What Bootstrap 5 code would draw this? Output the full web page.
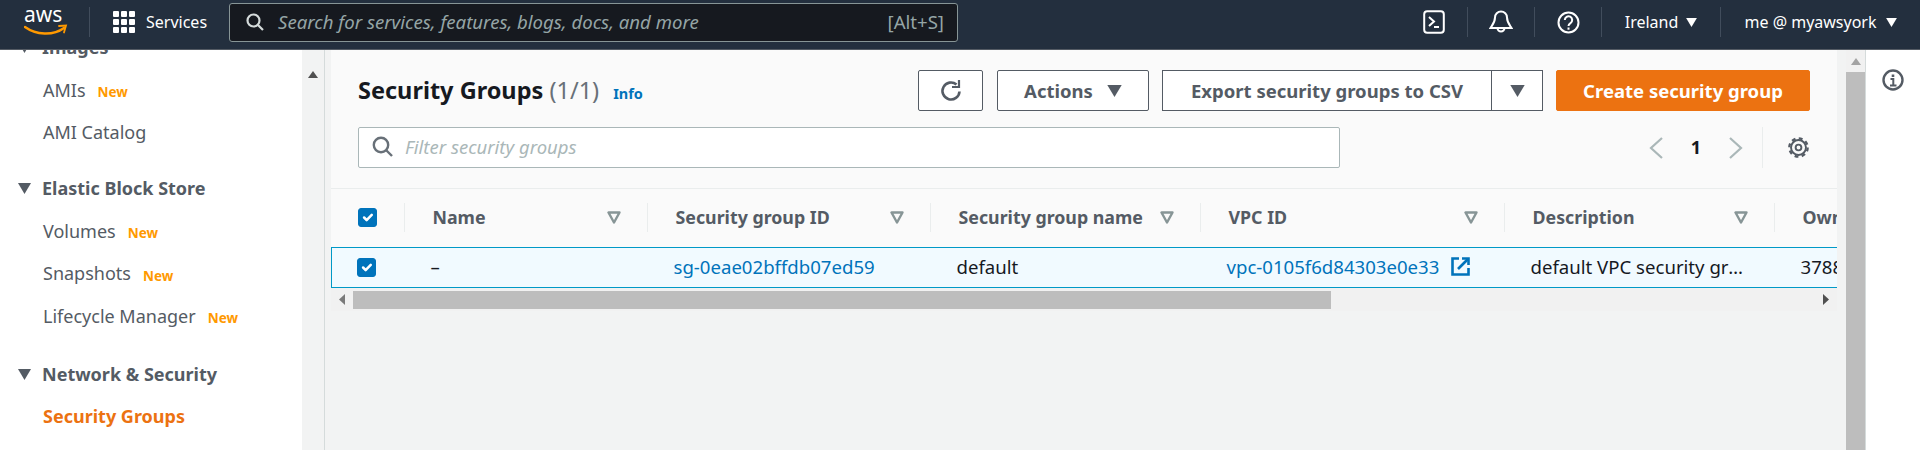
<!DOCTYPE html>
<html lang="en">
<head>
  <meta charset="UTF-8" />
  <meta name="viewport" content="width=device-width, initial-scale=1" />
  <title>Security Groups</title>
  <link href="https://cdn.jsdelivr.net/npm/bootstrap@5.3.0/dist/css/bootstrap.min.css" rel="stylesheet" />
  <style>
    html, body {
      height: 450px;
      overflow: hidden;
    }
    body {
      font-family: "Noto Sans", "Liberation Sans", sans-serif;
      font-size: 16px;
      color: #16191f;
      background: #f2f3f3;
    }
    /* top bar */
    .aws-top {
      height: 50px;
      background: #232f3e;
      border-bottom: 1px solid #545b64;
      padding: 0 0 5px 0;
      flex-wrap: nowrap;
      justify-content: flex-start;
      color: #fff;
    }
    .logo-cell { width: 90px; padding-left: 24px; }
    .services-cell { width: 139px; padding-left: 23px; gap: 11px; }
    .top-sep { height: 30px; border-right: 1px solid #414d5c; }
    .search-box {
      width: 729px;
      height: 39px;
      background: #16191f;
      border: 1px solid #879596;
      border-radius: 3px;
      padding: 0 13px 0 16px;
      color: #95a5a6;
      font-size: 18.6px;
    }
    .search-hint { font-style: italic; margin-left: 14px; }
    .top-cell { height: 30px; border-right: 1px solid #414d5c; }
    .top-cell-icon { width: 67px; }
    .top-cell-region { width: 119px; gap: 8px; }
    .top-cell-user { width: 199px; gap: 9px; border-right: 0; }

    /* sidebar */
    .app-body { height: 400px; }
    .side-nav {
      width: 302px;
      background: #fff;
      overflow: hidden;
      flex: none;
      color: #545b64;
      font-size: 18px;
    }
    .side-list { margin-top: -23.5px; }
    .side-item {
      height: 42.4px;
      padding-left: 43px;
      gap: 12px;
    }
    .side-head {
      height: 42.4px;
      font-weight: 700;
      padding-left: 18px;
      gap: 11px;
      margin-top: 14px;
    }
    .side-head:first-child { margin-top: 0; }
    .side-head-net { margin-top: 16px; }
    .side-new { color: #f90; font-size: 13.5px; font-weight: 700; position: relative; top: 2px; }
    .side-active { color: #ec7211; font-weight: 700; }
    .side-track {
      width: 23px;
      flex: none;
      background: #f2f3f3;
      border-right: 1px solid #d5dbdb;
      padding-top: 21px;
      text-align: center;
    }
    .main-wrap { flex: 1 1 0; min-width: 0; padding-left: 6px; }

    /* panel */
    .sg-panel { background: #fafafa; overflow: hidden; }
    .panel-head { padding: 20px 27px 20px 27px; }
    .title-line { height: 41px; }
    .sg-title { font-size: 23.5px; font-weight: 700; margin: 0; white-space: nowrap; }
    .sg-count { font-weight: 400; color: #687078; }
    .sg-info { color: #0073bb; font-size: 14.5px; font-weight: 700; margin-left: 14px; position: relative; top: 3px; text-decoration: none; }
    .aws-btn {
      height: 41px;
      background: #fff;
      border: 1px solid #545b64;
      border-radius: 2px;
      color: #545b64;
      font-size: 18.5px;
      font-weight: 700;
      padding: 0;
      white-space: nowrap;
    }
    .btn-refresh { width: 65px; margin-right: 14px; }
    .btn-actions { width: 152px; margin-right: 13px; gap: 14px; }
    .btn-export { width: 330px; }
    .btn-export-drop { width: 52px; margin-left: -1px; margin-right: 13px; }
    .btn-create {
      width: 254px;
      background: #ec7211;
      border-color: #ec7211;
      color: #fff;
    }
    .filter-line { margin-top: 16px; height: 41px; }
    .filter-box {
      width: 982px;
      height: 41px;
      background: #fff;
      border: 1px solid #aab7b8;
      border-radius: 2px;
      padding: 0 0 2px 13px;
      gap: 12px;
      color: #aab7b8;
      font-size: 18.5px;
      font-style: italic;
    }
    .pager-num { width: 66px; text-align: center; font-size: 18px; font-weight: 700; color: #16191f; }
    .pager-sep { height: 41px; border-left: 1px solid #eaeded; margin-left: 19px; padding-left: 24px; }

    /* table */
    .sg-scroll { overflow: hidden; border-top: 1px solid #eaeded; }
    .sg-table {
      table-layout: fixed;
      width: 1763px;
      margin: 0;
      border-collapse: collapse;
      --bs-table-bg: transparent;
    }
    .sg-table th {
      height: 58px;
      padding: 0;
      font-size: 17.8px;
      font-weight: 700;
      color: #545b64;
      border: 0;
      vertical-align: middle;
      white-space: nowrap;
    }
    .head-in {
      height: 29px;
      padding: 0 26px 0 28px;
      border-right: 1px solid #eaeded;
    }
    .head-first { padding: 0 0 0 26px; }
    .sg-table td {
      height: 40px;
      padding: 0 0 0 26px;
      background: #f1faff;
      border-top: 1px solid #0099c7;
      border-bottom: 1px solid #0099c7;
      font-size: 18.6px;
      white-space: nowrap;
      overflow: hidden;
      vertical-align: middle;
      color: #16191f;
    }
    .sg-table td.sg-row-start { border-left: 1px solid #0099c7; padding-left: 25px; }
    .sg-table a { color: #0073bb; text-decoration: none; }
    .sg-table .vpc-link { gap: 12px; }
    .sg-table .form-check-input {
      width: 19px;
      height: 19px;
      margin: 0;
      display: block;
      border-radius: 3px;
      background-color: #0073bb;
      border-color: #0073bb;
    }
    .sg-table td.cell-clip { padding-right: 28px; text-overflow: ellipsis; }
    .dash { color: #545b64; }
    .h-bar {
      height: 23px;
      background: #f1f1f1;
      padding: 3px 0 2px 0;
    }
    .h-thumb { width: 978px; height: 18px; background: #bdbdbd; margin-left: 22px; margin-right: auto; }
    .h-arrow { width: 22px; text-align: center; line-height: 0; }
    .arrow-l { margin-right: -22px; z-index: 1; }

    /* vertical scrollbar + right rail */
    .v-bar { width: 29px; flex: none; padding-left: 9px; border-right: 1px solid #d5dbdb; }
    .v-top { height: 22px; background: #f1f1f1; width: 19px; padding-top: 8px; text-align: center; line-height: 0; }
    .v-thumb { height: 378px; width: 19px; background: #bdbdbd; }
    .right-rail { flex: none; width: 54px; background: #fff; padding-top: 16px; text-align: center; }
  </style>
</head>
<body>

<svg width="0" height="0" class="d-block">
  <symbol id="tri-down" viewBox="0 0 12 10"><path d="M0 0h12L6 10z" fill="currentColor"/></symbol>
  <symbol id="tri-open" viewBox="0 0 14 13"><path d="M1.500 1.500h11L7 11.500z" fill="none" stroke="#879596" stroke-width="2.400" stroke-linejoin="round"/></symbol>
</svg>

<nav class="navbar aws-top">
  <div class="logo-cell d-flex align-items-center top-sep">
    <svg width="44" height="30" viewBox="0 0 44 30">
      <text x="0" y="15" fill="#fff" font-family="Noto Sans, sans-serif" font-size="21">aws</text>
      <path d="M1 20c11 8 28 9 39 1" fill="none" stroke="#f90" stroke-width="2.400" stroke-linecap="round"/>
      <path d="M35 19l7-.5-2 7" fill="none" stroke="#f90" stroke-width="1.800" stroke-linecap="round"/>
    </svg>
  </div>
  <div class="services-cell d-flex align-items-center">
    <svg width="22" height="22" viewBox="0 0 22 22" fill="#fff">
      <rect x="0" y="0" width="6" height="6" rx="1"/><rect x="8" y="0" width="6" height="6" rx="1"/><rect x="16" y="0" width="6" height="6" rx="1"/>
      <rect x="0" y="8" width="6" height="6" rx="1"/><rect x="8" y="8" width="6" height="6" rx="1"/><rect x="16" y="8" width="6" height="6" rx="1"/>
      <rect x="0" y="16" width="6" height="6" rx="1"/><rect x="8" y="16" width="6" height="6" rx="1"/><rect x="16" y="16" width="6" height="6" rx="1"/>
    </svg>
    <span>Services</span>
  </div>
  <div class="search-box d-flex align-items-center">
    <svg width="18" height="18" viewBox="0 0 18 18" fill="none" stroke="#d5dbdb" stroke-width="2.200"><circle cx="7.500" cy="7.500" r="6"/><path d="M12 12l5 5"/></svg>
    <span class="search-hint">Search for services, features, blogs, docs, and more</span>
    <span class="ms-auto">[Alt+S]</span>
  </div>
  <div class="d-flex align-items-center ms-auto">
    <div class="top-cell top-cell-icon d-flex align-items-center justify-content-center">
      <svg width="22" height="24" viewBox="0 0 22 24" fill="none" stroke="#fff" stroke-width="2"><rect x="1.200" y="1.200" width="19.600" height="21.600" rx="3"/><path d="M6 7l5 4.500-5 4.500M11 17h5"/></svg>
    </div>
    <div class="top-cell top-cell-icon d-flex align-items-center justify-content-center">
      <svg width="24" height="24" viewBox="0 0 24 24" fill="none" stroke="#fff" stroke-width="2"><path d="M12 1.500a6 6 0 0 0-6 6c0 5-3 8-4.500 10.500h21c-1.500-2.500-4.500-5.500-4.500-10.500a6 6 0 0 0-6-6z"/><path d="M8.500 18a3.500 3.500 0 0 0 7 0"/></svg>
    </div>
    <div class="top-cell top-cell-icon d-flex align-items-center justify-content-center">
      <svg width="23" height="23" viewBox="0 0 23 23" fill="none" stroke="#fff" stroke-width="2"><circle cx="11.500" cy="11.500" r="10"/><path d="M7.800 9a3.700 3.700 0 1 1 5.700 3.100c-1.300.8-2 1.400-2 2.900"/><path d="M11.500 16.500v2.200"/></svg>
    </div>
    <div class="top-cell top-cell-region d-flex align-items-center justify-content-center">
      <span>Ireland</span>
      <svg width="11" height="9" class="text-white"><use href="#tri-down"/></svg>
    </div>
    <div class="top-cell top-cell-user d-flex align-items-center justify-content-center">
      <span>me @ myawsyork</span>
      <svg width="11" height="9" class="text-white"><use href="#tri-down"/></svg>
    </div>
  </div>
</nav>

<div class="app-body d-flex">
  <aside class="side-nav">
    <ul class="list-unstyled side-list mb-0">
      <li class="side-head d-flex align-items-center"><svg width="13" height="11"><use href="#tri-down"/></svg>Images</li>
      <li class="side-item d-flex align-items-center">AMIs <span class="side-new">New</span></li>
      <li class="side-item d-flex align-items-center">AMI Catalog</li>
      <li class="side-head d-flex align-items-center"><svg width="13" height="11"><use href="#tri-down"/></svg>Elastic Block Store</li>
      <li class="side-item d-flex align-items-center">Volumes <span class="side-new">New</span></li>
      <li class="side-item d-flex align-items-center">Snapshots <span class="side-new">New</span></li>
      <li class="side-item d-flex align-items-center">Lifecycle Manager <span class="side-new">New</span></li>
      <li class="side-head side-head-net d-flex align-items-center"><svg width="13" height="11"><use href="#tri-down"/></svg>Network &amp; Security</li>
      <li class="side-item d-flex align-items-center side-active">Security Groups</li>
      <li class="side-item d-flex align-items-center">Elastic IPs</li>
    </ul>
  </aside>
  <div class="side-track">
    <svg width="10" height="7" viewBox="0 0 10 7" class="d-block mx-auto"><path d="M0 7h10L5 0z" fill="#505050"/></svg>
  </div>

  <div class="main-wrap">
    <section class="sg-panel">
      <div class="panel-head">
        <div class="title-line d-flex align-items-center">
          <h1 class="sg-title">Security Groups <span class="sg-count">(1/1)</span></h1>
          <a href="#" class="sg-info">Info</a>
          <div class="d-flex ms-auto">
            <button class="btn aws-btn btn-refresh d-flex align-items-center justify-content-center">
              <svg width="24" height="24" viewBox="0 0 24 24" fill="none" stroke="#545b64" stroke-width="2.600"><path d="M20.500 12.500a8.500 8.500 0 1 1-3-7"/><path d="M20 1v7h-7" stroke-width="2.200"/></svg>
            </button>
            <button class="btn aws-btn btn-actions d-flex align-items-center justify-content-center">
              <span>Actions</span><svg width="15" height="12"><use href="#tri-down"/></svg>
            </button>
            <button class="btn aws-btn btn-export d-flex align-items-center justify-content-center rounded-0">Export security groups to CSV</button>
            <button class="btn aws-btn btn-export-drop d-flex align-items-center justify-content-center rounded-0">
              <svg width="15" height="12"><use href="#tri-down"/></svg>
            </button>
            <button class="btn aws-btn btn-create d-flex align-items-center justify-content-center">Create security group</button>
          </div>
        </div>
        <div class="filter-line d-flex align-items-center">
          <div class="filter-box d-flex align-items-center">
            <svg width="21" height="21" viewBox="0 0 21 21" fill="none" stroke="#687078" stroke-width="2.400"><circle cx="9" cy="9" r="7.200"/><path d="M14 14l6 6"/></svg>
            <span>Filter security groups</span>
          </div>
          <div class="d-flex align-items-center ms-auto">
            <svg width="14" height="22" viewBox="0 0 14 22" fill="none" stroke="#aab7b8" stroke-width="2.200"><path d="M13 1L2 11l11 10"/></svg>
            <span class="pager-num px-0">1</span>
            <svg width="14" height="22" viewBox="0 0 14 22" fill="none" stroke="#aab7b8" stroke-width="2.200"><path d="M1 1l11 10L1 21"/></svg>
            <div class="pager-sep d-flex align-items-center">
              <svg width="23" height="23" viewBox="0 0 24 24" fill="none" stroke="#545b64"><circle cx="12" cy="12" r="7.800" stroke-width="2"/><circle cx="12" cy="12" r="3" stroke-width="2"/><circle cx="12" cy="12" r="9.600" stroke-width="2.400" stroke-dasharray="4 3.540"/></svg>
            </div>
          </div>
        </div>
      </div>

      <div class="sg-scroll">
        <table class="table sg-table">
          <colgroup>
            <col width="73"><col width="243"><col width="283"><col width="270"><col width="304"><col width="270"><col width="320">
          </colgroup>
          <thead>
            <tr>
              <th><div class="head-in head-first d-flex align-items-center"><input class="form-check-input" type="checkbox" checked aria-label="Select all"></div></th>
              <th><div class="head-in d-flex align-items-center justify-content-between">Name<svg width="14" height="13"><use href="#tri-open"/></svg></div></th>
              <th><div class="head-in d-flex align-items-center justify-content-between">Security group ID<svg width="14" height="13"><use href="#tri-open"/></svg></div></th>
              <th><div class="head-in d-flex align-items-center justify-content-between">Security group name<svg width="14" height="13"><use href="#tri-open"/></svg></div></th>
              <th><div class="head-in d-flex align-items-center justify-content-between">VPC ID<svg width="14" height="13"><use href="#tri-open"/></svg></div></th>
              <th><div class="head-in d-flex align-items-center justify-content-between">Description<svg width="14" height="13"><use href="#tri-open"/></svg></div></th>
              <th><div class="head-in d-flex align-items-center justify-content-between">Owner<svg width="14" height="13"><use href="#tri-open"/></svg></div></th>
            </tr>
          </thead>
          <tbody>
            <tr>
              <td class="sg-row-start"><input class="form-check-input" type="checkbox" checked aria-label="Select row"></td>
              <td class="dash">–</td>
              <td><a href="#">sg-0eae02bffdb07ed59</a></td>
              <td>default</td>
              <td>
                <a href="#" class="vpc-link d-inline-flex align-items-center">vpc-0105f6d84303e0e33
                  <svg width="19" height="19" viewBox="0 0 19 19" fill="none" stroke="#0073bb" stroke-width="2.600"><path d="M8 1.500H1.500v16h16V11"/><path d="M7 12L17 2"/><path d="M11 1.500h6.500V8"/></svg>
                </a>
              </td>
              <td class="cell-clip">default VPC security group</td>
              <td>378812345678</td>
            </tr>
          </tbody>
        </table>
      </div>
      <div class="h-bar d-flex align-items-center">
        <div class="h-arrow arrow-l"><svg width="6" height="11" viewBox="0 0 6 11"><path d="M6 0v11L0 5.500z" fill="#7a7a7a"/></svg></div>
        <div class="h-thumb"></div>
        <div class="h-arrow"><svg width="6" height="11" viewBox="0 0 6 11"><path d="M0 0v11l6-5.500z" fill="#505050"/></svg></div>
      </div>
    </section>
  </div>

  <div class="v-bar">
    <div class="v-top"><svg width="10" height="7" viewBox="0 0 10 7"><path d="M0 7h10L5 0z" fill="#a3a3a3"/></svg></div>
    <div class="v-thumb"></div>
  </div>
  <div class="right-rail">
    <svg width="22" height="22" viewBox="0 0 22 22" fill="none" stroke="#545b64" stroke-width="2.400"><circle cx="11" cy="11" r="9.500"/><path d="M8.500 10h2.800v6M8 16.500h6.500" stroke-width="2"/><path d="M11 5.500v2.500" stroke-width="2.600"/></svg>
  </div>
</div>

<script src="https://cdn.jsdelivr.net/npm/bootstrap@5.3.0/dist/js/bootstrap.bundle.min.js"></script>
</body>
</html>
